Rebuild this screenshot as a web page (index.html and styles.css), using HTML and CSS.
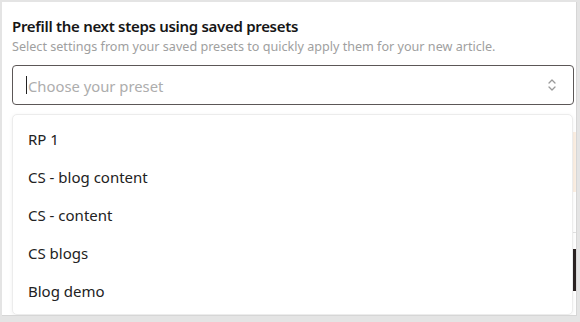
FILE: index.html
```html
<!DOCTYPE html>
<html>
<head>
<meta charset="utf-8">
<link rel="stylesheet" href="styles.css">
</head>
<body>
<div class="frame">
  <div class="panel">
    <h2 class="title">Prefill the next steps using saved presets</h2>
    <p class="subtitle">Select settings from your saved presets to quickly apply them for your new article.</p>
    <div class="select-wrap">
      <div class="select">
        <span class="caret"></span>
        <span class="placeholder">Choose your preset</span>
        <svg class="chevrons" width="10" height="14" viewBox="0 0 10 14" fill="none" stroke="#9a9a9a" stroke-width="1.3" stroke-linecap="round" stroke-linejoin="round">
          <path d="M2 5 L5 2 L8 5"/>
          <path d="M2 9 L5 12 L8 9"/>
        </svg>
      </div>
      <ul class="menu">
        <li class="option">RP 1</li>
        <li class="option">CS - blog content</li>
        <li class="option">CS - content</li>
        <li class="option">CS blogs</li>
        <li class="option">Blog demo</li>
      </ul>
    </div>
    <div class="under">
      <div class="peach"></div>
      <div class="divider"></div>
      <div class="btn-row"><span class="dark-btn">Next &gt;</span></div>
    </div>
  </div>
</div>
</body>
</html>
```

FILE: styles.css
```css
html, body {
  margin: 0;
  padding: 0;
}
body {
  background: #e4e4e4;
  font-family: "Noto Sans", "Open Sans", sans-serif;
  width: 580px;
  height: 322px;
  overflow: hidden;
}
.frame {
  padding: 2px 3px 0 2px;
}
.panel {
  background: #fff;
  height: 314px;
  border-right: 1px solid #d6d6d6;
  border-bottom: 1px solid #d6d6d6;
  padding: 14px 2px 0 10px;
  box-sizing: border-box;
  overflow: hidden;
}
.title {
  margin: 0;
  font-size: 15px;
  line-height: 20px;
  font-weight: 600;
  letter-spacing: -0.3px;
  color: #161616;
}
.subtitle {
  margin: 2px 0 0;
  font-size: 12.6px;
  line-height: 18px;
  color: #a0a0a0;
}
.select-wrap {
  position: relative;
  margin-top: 9px;
}
.select {
  height: 40px;
  box-sizing: border-box;
  border: 1.5px solid #5c5757;
  border-radius: 4px;
  display: flex;
  align-items: center;
  padding: 0 16px 0 13px;
}
.caret {
  width: 1px;
  height: 18px;
  background: #222;
  margin-right: 1px;
}
.placeholder {
  flex: 1;
  font-size: 14.8px;
  color: #adadad;
  position: relative;
  top: 1px;
}
.chevrons {
  display: block;
}
.menu {
  position: absolute;
  left: 0;
  right: 1px;
  top: 49px;
  margin: 0;
  padding: 5px 0 4px;
  list-style: none;
  background: #fff;
  border: 1px solid #ececec;
  border-radius: 5px;
  box-shadow: 0 1px 4px rgba(0,0,0,0.06);
  z-index: 2;
}
.option {
  height: 38px;
  line-height: 38px;
  padding-left: 15px;
  font-size: 15px;
  color: #222;
}
.under {
  margin-top: 27px;
  margin-right: -2px;
}
.peach {
  height: 60px;
  background: #fcefe3;
}
.divider {
  height: 1px;
  background: #e2e2e2;
  margin-top: 40px;
}
.btn-row {
  display: flex;
  justify-content: flex-end;
  margin-top: 16px;
}
.dark-btn {
  background: #2b2222;
  color: #fff;
  font-size: 14px;
  height: 42px;
  line-height: 42px;
  padding: 0 6px 0 16px;
  border-radius: 4px 0 0 4px;
}
```
